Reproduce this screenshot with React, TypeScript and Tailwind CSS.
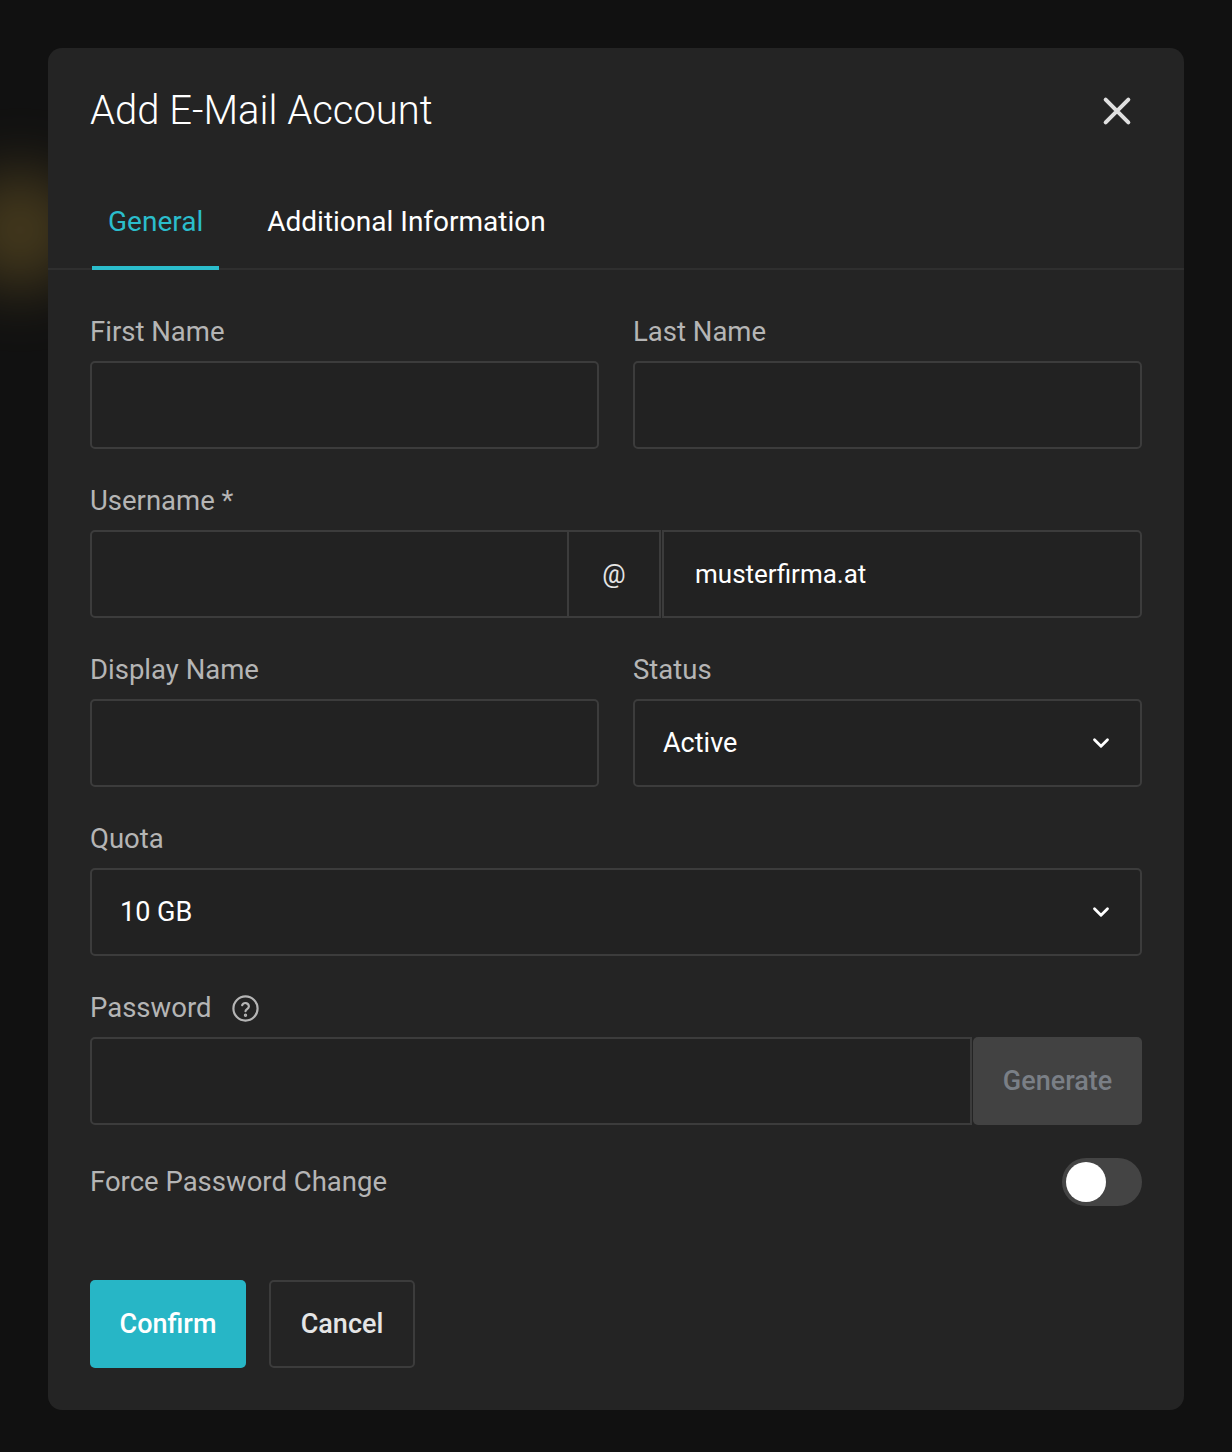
import React from "react";

const font = { fontFamily: "Roboto, 'Noto Sans', sans-serif" };

function Label({ children }: { children: React.ReactNode }) {
  return <div className="text-[27.5px] leading-[30px] text-[#b5b5b5] mb-[14px] flex items-center gap-[20px]">{children}</div>;
}

function Chevron() {
  return (
    <svg width="26" height="26" viewBox="0 0 24 24" fill="none" stroke="#fff" strokeWidth="2.6" strokeLinecap="round" strokeLinejoin="round">
      <path d="M6 9l6 6 6-6" />
    </svg>
  );
}

const inputCls = "h-[88px] rounded-[5px] border-2 border-[#3c3c3c] bg-[#222222]";

export default function App() {
  return (
    <div className="min-h-[1452px] bg-[#111111] relative overflow-hidden" style={font}>
      <div className="absolute left-[-40px] top-[170px] w-[120px] h-[120px] rounded-full bg-[#5a4a22] blur-[30px] opacity-70" />
      <div className="relative mx-[48px] pt-[48px] pb-[48px]">
        <div className="bg-[#242424] rounded-[14px]">
          <div className="px-[42px] pt-[37px] flex items-center justify-between">
            <div className="text-[40px] leading-[52px] font-light text-white">Add E-Mail Account</div>
            <svg width="32" height="32" viewBox="0 0 24 24" stroke="#e0e0e0" strokeWidth="3" strokeLinecap="round" className="mr-[9px]">
              <path d="M3.5 3.5l17 17M20.5 3.5l-17 17" />
            </svg>
          </div>
          <div className="mt-[55px] border-b-2 border-[#2f2f2f] px-[44px] flex">
            <div className="px-[16px] pt-[14px] pb-[28px] text-[28px] leading-[32px] text-[#2bbdcc] border-b-[4px] border-[#2bbdcc] mb-[-2px]">General</div>
            <div className="px-[48px] pt-[14px] pb-[28px] text-[28px] leading-[32px] text-white">Additional Information</div>
          </div>
          <div className="px-[42px] pt-[47px] pb-[42px] flex flex-col">
            <div className="grid grid-cols-2 gap-x-[34px]">
              <div><Label>First Name</Label><div className={inputCls} /></div>
              <div><Label>Last Name</Label><div className={inputCls} /></div>
            </div>
            <div className="mt-[37px]">
              <Label>Username *</Label>
              <div className="flex">
                <div className={inputCls + " w-[479px] rounded-r-none"} />
                <div className={inputCls + " w-[92px] rounded-none border-l-0 flex items-center justify-center text-[26px] text-[#e5e5e5]"}>@</div>
                <div className={inputCls + " flex-1 rounded-l-none ml-[1px] flex items-center pl-[31px] text-[26px] text-white"}>musterfirma.at</div>
              </div>
            </div>
            <div className="mt-[37px] grid grid-cols-2 gap-x-[34px]">
              <div><Label>Display Name</Label><div className={inputCls} /></div>
              <div>
                <Label>Status</Label>
                <div className={inputCls + " flex items-center justify-between pl-[28px] pr-[26px] text-[27px] text-white"}>
                  <span>Active</span><Chevron />
                </div>
              </div>
            </div>
            <div className="mt-[37px]">
              <Label>Quota</Label>
              <div className={inputCls + " flex items-center justify-between pl-[28px] pr-[26px] text-[27px] text-white"}>
                <span>10 GB</span><Chevron />
              </div>
            </div>
            <div className="mt-[37px]">
              <Label>
                <span>Password</span>
                <svg width="29" height="29" viewBox="0 0 24 24" fill="none" stroke="#b5b5b5" strokeWidth="1.8" strokeLinecap="round">
                  <circle cx="12" cy="12" r="10" />
                  <path d="M9.2 9.3a2.9 2.9 0 0 1 5.6 1c0 1.9-2.8 2.4-2.8 4" />
                  <circle cx="12" cy="17.6" r="0.5" fill="#b5b5b5" />
                </svg>
              </Label>
              <div className="flex">
                <div className={inputCls + " flex-1 rounded-r-none"} />
                <div className="h-[88px] w-[169px] ml-[1px] rounded-[5px] bg-[#424242] flex items-center justify-center text-[27px] font-medium text-[#7a7f86]">Generate</div>
              </div>
            </div>
            <div className="mt-[33px] flex items-center justify-between">
              <div className="text-[27.5px] text-[#b5b5b5]">Force Password Change</div>
              <div className="w-[80px] h-[48px] rounded-full bg-[#444444] flex items-center px-[4px]">
                <div className="w-[40px] h-[40px] rounded-full bg-white" />
              </div>
            </div>
            <div className="mt-[74px] flex gap-[23px]">
              <div className="h-[88px] w-[156px] rounded-[5px] bg-[#27b6c6] flex items-center justify-center text-[27px] font-medium text-white">Confirm</div>
              <div className="h-[88px] w-[146px] rounded-[5px] border-2 border-[#3c3c3c] flex items-center justify-center text-[27px] font-medium text-[#e5e5e5]">Cancel</div>
            </div>
          </div>
        </div>
      </div>
    </div>
  );
}
